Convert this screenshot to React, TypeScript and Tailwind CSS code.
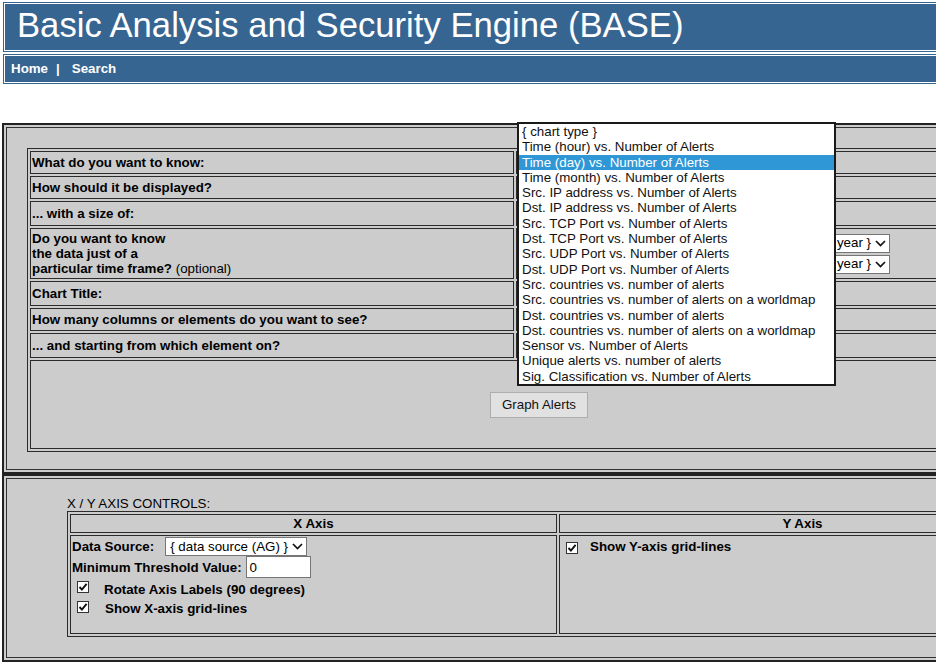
import React from 'react';

const chartTypes = [
  '{ chart type }',
  'Time (hour) vs. Number of Alerts',
  'Time (day) vs. Number of Alerts',
  'Time (month) vs. Number of Alerts',
  'Src. IP address vs. Number of Alerts',
  'Dst. IP address vs. Number of Alerts',
  'Src. TCP Port vs. Number of Alerts',
  'Dst. TCP Port vs. Number of Alerts',
  'Src. UDP Port vs. Number of Alerts',
  'Dst. UDP Port vs. Number of Alerts',
  'Src. countries vs. number of alerts',
  'Src. countries vs. number of alerts on a worldmap',
  'Dst. countries vs. number of alerts',
  'Dst. countries vs. number of alerts on a worldmap',
  'Sensor vs. Number of Alerts',
  'Unique alerts vs. number of alerts',
  'Sig. Classification vs. Number of Alerts',
];

const Chevron = () => (
  <svg width="11" height="7" viewBox="0 0 11 7" className="shrink-0">
    <polyline points="1,1 5.5,5.5 10,1" fill="none" stroke="#111" strokeWidth="1.7" />
  </svg>
);

const SelectBox = ({ label, className = '' }: { label: string; className?: string }) => (
  <div className={`inline-flex items-center h-[19px] bg-white border border-[#767676] pl-[4px] pr-[3px] whitespace-nowrap ${className}`}>
    <span>{label}</span>
    <span className="ml-[4px] flex"><Chevron /></span>
  </div>
);

const CheckBox = ({ className = '' }: { className?: string }) => (
  <span className={`flex shrink-0 items-center justify-center w-[12px] h-[12px] bg-white border border-[#333] ${className}`}>
    <svg width="10" height="10" viewBox="0 0 10 10">
      <polyline points="1.5,5 3.9,7.6 8.6,1.8" fill="none" stroke="#111" strokeWidth="1.9" />
    </svg>
  </span>
);

const TextBox = ({ value = '', className = '' }: { value?: string; className?: string }) => (
  <div className={`flex items-center h-[21px] bg-white border border-[#767676] pl-[3px] ${className}`}>{value}</div>
);

const cell = 'border border-[#2b2b2b] px-px flex items-center';

export default function App() {
  return (
    <div className="w-[936px] h-[668px] overflow-hidden bg-white font-['Liberation_Sans',Arial,sans-serif] text-[13.33px] leading-[15.33px] text-black">
      <div className="relative w-[1110px] pt-[2px] pl-[2px]">
        {/* header */}
        <header className="ml-px">
          <div className="border border-[#376591] p-px">
            <div className="h-[46px] bg-[#376591] pl-[12px] pt-[1px] text-[34.67px] leading-[40px] text-white whitespace-nowrap">
              Basic Analysis and Security Engine (BASE)
            </div>
          </div>
          <div className="mt-[2px] border border-[#376591] p-px">
            <div className="h-[26px] bg-[#376591] pl-[6px] flex items-center font-bold text-white">
              <span>Home</span>
              <span className="ml-[8px]">|</span>
              <span className="ml-[12px]">Search</span>
            </div>
          </div>
        </header>

        {/* chart form */}
        <section className="mt-[39px] border-2 border-[#222] p-[2px] bg-[#cccccc]">
          <div className="border border-[#333] pl-[20px] pt-[20px] pb-[17px]">
            <div className="grid grid-cols-[484px_532px] gap-[2px] p-[2px] border border-[#2b2b2b] w-fit">
              <div className={`${cell} h-[23px] font-bold`}>What do you want to know:</div>
              <div className={cell} />

              <div className={`${cell} h-[23px] font-bold`}>How should it be displayed?</div>
              <div className={cell} />

              <div className={`${cell} h-[25px] font-bold`}>... with a size of:</div>
              <div className={cell} />

              <div className={`${cell} h-[51px] font-bold`}>
                <div>
                  Do you want to know<br />the data just of a<br />particular time frame? <span className="font-normal">(optional)</span>
                </div>
              </div>
              <div className={`${cell} flex-col items-start justify-center gap-[2px]`}>
                <div className="w-[372px] flex justify-end">
                  <SelectBox label="{ year }" />
                </div>
                <div className="w-[372px] flex justify-end">
                  <SelectBox label="{ year }" />
                </div>
              </div>

              <div className={`${cell} h-[25px] font-bold`}>Chart Title:</div>
              <div className={cell} />

              <div className={`${cell} h-[23px] font-bold`}>How many columns or elements do you want to see?</div>
              <div className={cell} />

              <div className={`${cell} h-[25px] font-bold`}>... and starting from which element on?</div>
              <div className={cell} />

              <div className={`${cell} col-span-2 h-[89px] justify-center`}>
                <button className="w-[98px] h-[26px] bg-[#e1e1e1] border border-[#adadad] text-[13.33px] text-[#111]">Graph Alerts</button>
              </div>
            </div>
          </div>
        </section>

        {/* axis controls */}
        <section className="border-2 border-[#222] p-[2px] bg-[#cccccc]">
          <div className="border border-[#333] pl-[60px] pt-[17px] pb-[20px]">
            <div>X / Y AXIS CONTROLS:</div>
            <div className="grid grid-cols-[487px_487px] gap-[2px] p-[2px] border border-[#2b2b2b] w-fit">
              <div className={`${cell} h-[19px] justify-center font-bold`}>X Axis</div>
              <div className={`${cell} h-[19px] justify-center font-bold`}>Y Axis</div>

              <div className="border border-[#2b2b2b] h-[99px] px-px pt-px">
                <div className="flex items-center h-[19px]">
                  <span className="font-bold">Data Source:</span>
                  <SelectBox label="{ data source (AG) }" className="ml-[11px]" />
                </div>
                <div className="flex items-center h-[22px]">
                  <span className="font-bold">Minimum Threshold Value:</span>
                  <TextBox value="0" className="ml-[4px] w-[65px] h-[22px]" />
                </div>
                <div className="flex items-start h-[20px]">
                  <CheckBox className="ml-[5px] mt-[3px]" />
                  <span className="ml-[15px] mt-[4px] font-bold">Rotate Axis Labels (90 degrees)</span>
                </div>
                <div className="flex items-start h-[20px]">
                  <CheckBox className="ml-[5px] mt-[3px]" />
                  <span className="ml-[16px] mt-[3px] font-bold">Show X-axis grid-lines</span>
                </div>
              </div>

              <div className="border border-[#2b2b2b] h-[99px] px-px">
                <div className="flex items-start">
                  <CheckBox className="ml-[5px] mt-[6px]" />
                  <span className="ml-[12px] mt-[3px] font-bold">Show Y-axis grid-lines</span>
                </div>
              </div>
            </div>
          </div>
        </section>

        {/* open chart type list */}
        <div className="absolute left-[517px] top-[122px] w-[319px] border-2 border-[#1a1a1a] bg-white">
          {chartTypes.map((t, i) => (
            <div
              key={t}
              className={`h-[15.3px] leading-[15.3px] pl-[3px] whitespace-nowrap ${i === 2 ? 'bg-[#2f97d6] text-white' : 'text-[#111]'}`}
            >
              {t}
            </div>
          ))}
        </div>
      </div>
    </div>
  );
}
